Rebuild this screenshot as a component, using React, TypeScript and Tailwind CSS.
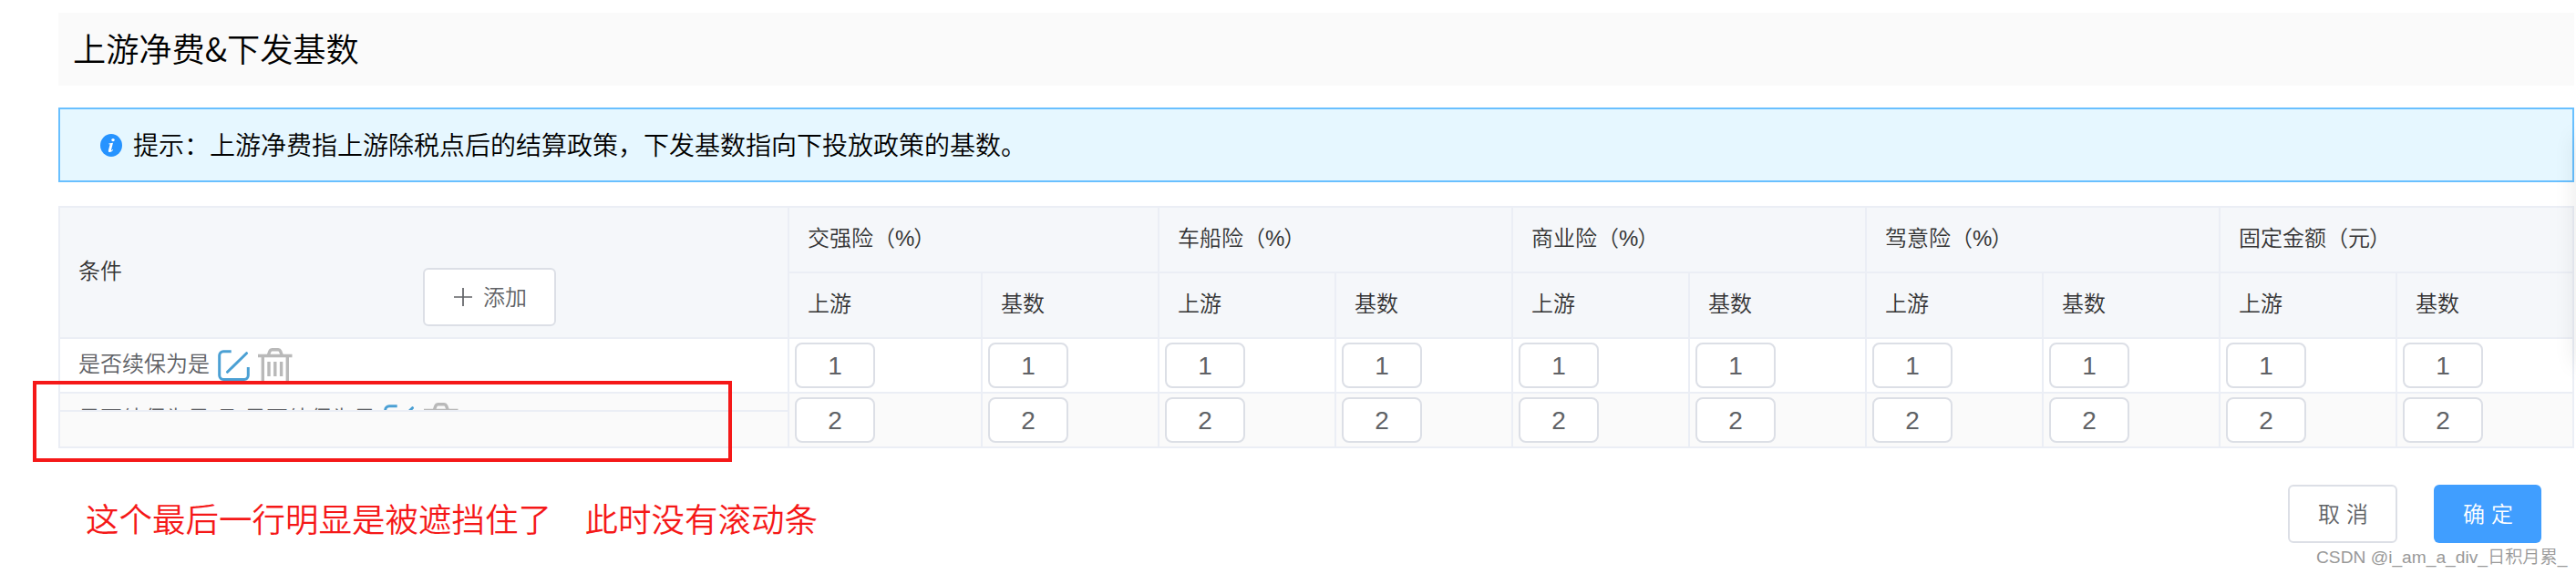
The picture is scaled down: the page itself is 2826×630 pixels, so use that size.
type Row = {
  conditions: string[];
  value: number;
};

const groups = [
  { name: '交强险', unit: '%' },
  { name: '车船险', unit: '%' },
  { name: '商业险', unit: '%' },
  { name: '驾意险', unit: '%' },
  { name: '固定金额', unit: '元' },
];

const rows: Row[] = [
  { conditions: ['是否续保为是'], value: 1 },
  { conditions: ['是否续保为是', '且', '是否续保为是'], value: 2 },
];

const columns = groups.flatMap(({ name }) => [
  { key: `${name}-up`, label: '上游' },
  { key: `${name}-base`, label: '基数' },
]);

const columnsClass = 'grid grid-cols-[212px_repeat(9,194px)]';

function InfoIcon() {
  return (
    <svg className="h-[25px] w-6 shrink-0" viewBox="0 0 24 25">
      <ellipse cx="12" cy="12.5" rx="12" ry="12.5" fill="#2693ff" />
      <circle cx="14" cy="6.6" r="1.7" fill="#fff" />
      <path
        d="M9.4 10.6 14 9.7 12 17.6c-.2.8.3.9 1.7-.5l.5.5c-1.5 1.8-2.6 2.5-3.8 2.5-1.3 0-1.8-.9-1.4-2.4l1.6-5.9c.1-.5-.2-.7-1.3-.6z"
        fill="#fff"
      />
    </svg>
  );
}

function EditIcon() {
  return (
    <svg className="h-[34px] w-[35px] shrink-0" viewBox="0 0 35 34" fill="none" stroke="#4ba0d4" strokeWidth="3">
      <path d="M14.7 1.8H6a4.3 4.3 0 0 0-4.3 4.3v22A4.3 4.3 0 0 0 6 32.4h23a4.3 4.3 0 0 0 4.3-4.3V19" />
      <path d="M10.5 24.3 31.5 3.7" strokeLinecap="round" />
    </svg>
  );
}

function TrashIcon() {
  return (
    <svg className="h-[40px] w-[38px] shrink-0" viewBox="0 0 38 40" fill="none" stroke="#b9b9b9">
      <path d="M0 8.5h37.5" strokeWidth="3.4" />
      <path d="M11.3 8 13 3.4a2.6 2.6 0 0 1 2.4-1.7h6.8a2.6 2.6 0 0 1 2.4 1.7L26.3 8" strokeWidth="3.4" />
      <path d="M5.3 9v29h27V9" strokeWidth="3.4" />
      <path d="M12 15v16M18.8 15v16M25.6 15v16" strokeWidth="3.4" />
    </svg>
  );
}

function ConditionCell({ conditions }: { conditions: string[] }) {
  return (
    <div className="flex h-[58px] items-start pl-5 pt-2.5 text-[#606266]">
      <div className="-mt-px flex gap-[7px] leading-[34px]">
        {conditions.map((condition, index) => (
          <span key={index}>{condition}</span>
        ))}
      </div>
      <div className="ml-[9px] flex items-start gap-[9px]">
        <span className="pt-[2px]">
          <EditIcon />
        </span>
        <TrashIcon />
      </div>
    </div>
  );
}

export default function App() {
  return (
    <div className="relative h-[630px] w-[2826px] overflow-hidden bg-white pl-16 pt-3.5 font-['Noto_Sans_CJK_SC',sans-serif] text-2xl font-[350] text-[#333]">
      <h1 className="flex h-20 w-[2760px] items-center bg-[#fafafa] pb-1 pl-4 text-[36.2px] leading-none text-black">
        上游净费&amp;下发基数
      </h1>

      <div className="mt-6 flex h-[82px] w-[2760px] items-center border-2 border-[#69c0ff] bg-[#e6f7ff] pl-11 text-[28px] text-black">
        <InfoIcon />
        <p className="ml-3 pb-[3px] leading-none">
          提示：上游净费指上游除税点后的结算政策，下发基数指向下投放政策的基数。
        </p>
      </div>

      <div className="mt-[26px] w-[2760px] border-l-2 border-t-2 border-[#ebeef5]">
        <div className="flex h-36 bg-[#f5f7fa]">
          <div className="flex w-[800px] border-b-2 border-r-2 border-[#ebeef5] pl-5">
            <span className="mt-[50px] leading-9">条件</span>
            <button className="ml-[330px] mt-[66px] flex h-16 w-[146px] items-center rounded-md border-2 border-[#dcdfe6] bg-white pl-8 leading-none text-[#606266]">
              <svg className="h-5 w-5" viewBox="0 0 20 20" stroke="#606266" strokeWidth="1.7">
                <path d="M10 0v20M0 10h20" />
              </svg>
              <span className="ml-3 pb-0.5">添加</span>
            </button>
          </div>
          <div>
            <div className="grid grid-cols-[406px_repeat(4,388px)]">
              {groups.map((group) => (
                <div
                  key={group.name}
                  className="h-[72px] border-b-2 border-r-2 border-[#ebeef5] pl-5 pt-3.5 leading-9"
                >
                  {group.name}（
                  <span className="font-['Liberation_Sans','Noto_Sans_CJK_SC',sans-serif] tracking-[-1px]">
                    {group.unit}
                  </span>
                  ）
                </div>
              ))}
            </div>
            <div className={columnsClass}>
              {columns.map((column) => (
                <div
                  key={column.key}
                  className="h-[72px] border-b-2 border-r-2 border-[#ebeef5] pl-5 pt-3.5 leading-9"
                >
                  {column.label}
                </div>
              ))}
            </div>
          </div>
        </div>

        <div className="flex">
          {/* fixed column, its body is shorter than the scrolling one */}
          <div className="w-[800px] border-b-2 border-r-2 border-[#ebeef5] bg-[#fafafa]">
            <div className="h-20 overflow-hidden border-b-2 border-[#ebeef5]">
              {rows.map((row) => (
                <div
                  key={row.value}
                  className="border-b-2 border-[#ebeef5] odd:bg-white even:bg-[#fafafa]"
                >
                  <ConditionCell conditions={row.conditions} />
                </div>
              ))}
            </div>
          </div>
          <div>
            {rows.map((row) => (
              <div key={row.value} className="odd:bg-white even:bg-[#fafafa]">
                <div className={columnsClass}>
                  {columns.map((column) => (
                    <div
                      key={column.key}
                      className="h-[60px] border-b-2 border-r-2 border-[#ebeef5] pl-1.5 pt-1"
                    >
                      <div className="h-[50px] w-[88px] rounded-lg border-2 border-[#dcdfe6] bg-white text-center font-['Liberation_Sans',sans-serif] text-[28px] font-normal leading-[48px] text-[#606266]">
                        {row.value}
                      </div>
                    </div>
                  ))}
                </div>
              </div>
            ))}
          </div>
        </div>
      </div>

      <div className="flex justify-between pr-[38px] pt-10">
        <p className="ml-[30px] mt-[9px] whitespace-pre text-[36.5px] leading-[56px] text-[#f51818]">
          这个最后一行明显是被遮挡住了　此时没有滚动条
        </p>
        <div className="flex gap-10">
          <button className="flex h-16 w-[120px] items-center rounded-md border-2 border-[#dcdfe6] bg-white pb-0.5 pl-[31px] leading-none text-[#606266]">
            取<span className="ml-[7px]">消</span>
          </button>
          <button className="flex h-16 w-[118px] items-center rounded-md bg-[#409eff] pb-0.5 pl-8 leading-none text-white">
            确<span className="ml-[7px]">定</span>
          </button>
        </div>
      </div>

      {/* annotation around the cut off row */}
      <div className="absolute left-9 top-[418px] h-[89px] w-[767px] border-4 border-[#f51818]" />
      <div className="absolute -right-5 top-[150px] h-[250px] w-5 shadow-[0_0_24px_rgba(0,0,0,0.1)]" />
      <span className="absolute left-[2541px] top-[598px] whitespace-nowrap font-['Liberation_Sans','Noto_Sans_CJK_SC',sans-serif] text-[19.2px] leading-7 text-[#999]">
        CSDN @i_am_a_div_日积月累_
      </span>
    </div>
  );
}
